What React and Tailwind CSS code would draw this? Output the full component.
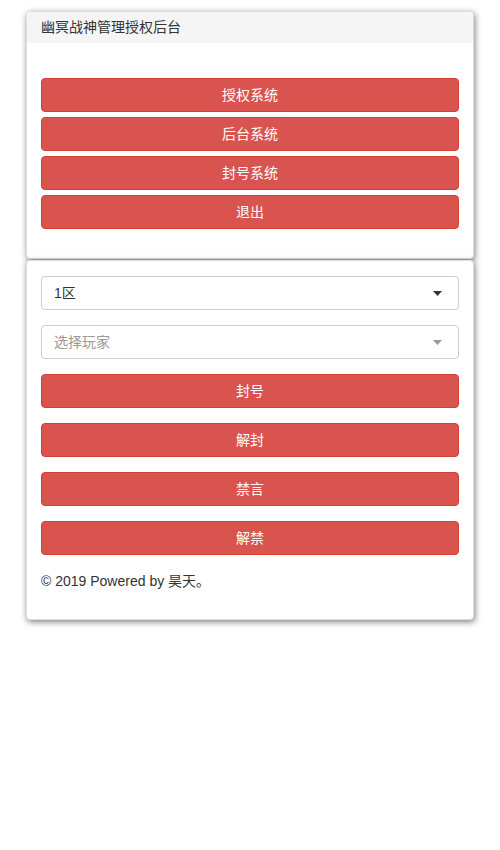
import React from 'react';

const font = { fontFamily: '"Liberation Sans", "Noto Sans CJK SC", sans-serif' };

function RedButton({ children }) {
    return (
        <button className="w-full h-[34px] rounded-[4px] bg-[#d9534f] border border-[#d43f3a] text-white text-[14px] leading-none">
            {children}
        </button>
    );
}

function Select({ value, muted }) {
    return (
        <div className="h-[34px] rounded-[4px] border border-[#ccc] bg-white flex items-center justify-between pl-[12px] pr-[16px]">
            <span className={muted ? 'text-[14px] text-[#999]' : 'text-[14px] text-[#333]'}>{value}</span>
            <svg width="9" height="5" viewBox="0 0 9 5">
                <path d="M0 0 L9 0 L4.5 5 Z" fill={muted ? '#999' : '#333'} />
            </svg>
        </div>
    );
}

export default function App() {
    const menu = ['授权系统', '后台系统', '封号系统', '退出'];
    const actions = ['封号', '解封', '禁言', '解禁'];

    return (
        <div className="w-[500px] min-h-[850px] bg-white pt-[11px] px-[26px] text-[#333]" style={font}>
            <div className="rounded-[4px] border border-[#ddd] bg-white shadow-[1px_2px_6px_rgba(0,0,0,0.5)] overflow-hidden">
                <div className="h-[31px] bg-[#f5f5f5] px-[14px] flex items-center text-[14px]">
                    幽冥战神管理授权后台
                </div>
                <div className="px-[14px] pt-[35px] pb-[29px] flex flex-col gap-[5px]">
                    {menu.map(m => <RedButton key={m}>{m}</RedButton>)}
                </div>
            </div>

            <div className="mt-[1px] rounded-[4px] border border-[#ddd] bg-white shadow-[1px_2px_6px_rgba(0,0,0,0.5)]">
                <div className="px-[14px] pt-[15px] pb-[28px] flex flex-col gap-[15px]">
                    <Select value="1区" />
                    <Select value="选择玩家" muted />
                    {actions.map(a => <RedButton key={a}>{a}</RedButton>)}
                    <p className="text-[14px] mt-[1px] leading-[20px]">© 2019 Powered by 昊天。</p>
                </div>
            </div>
        </div>
    );
}
